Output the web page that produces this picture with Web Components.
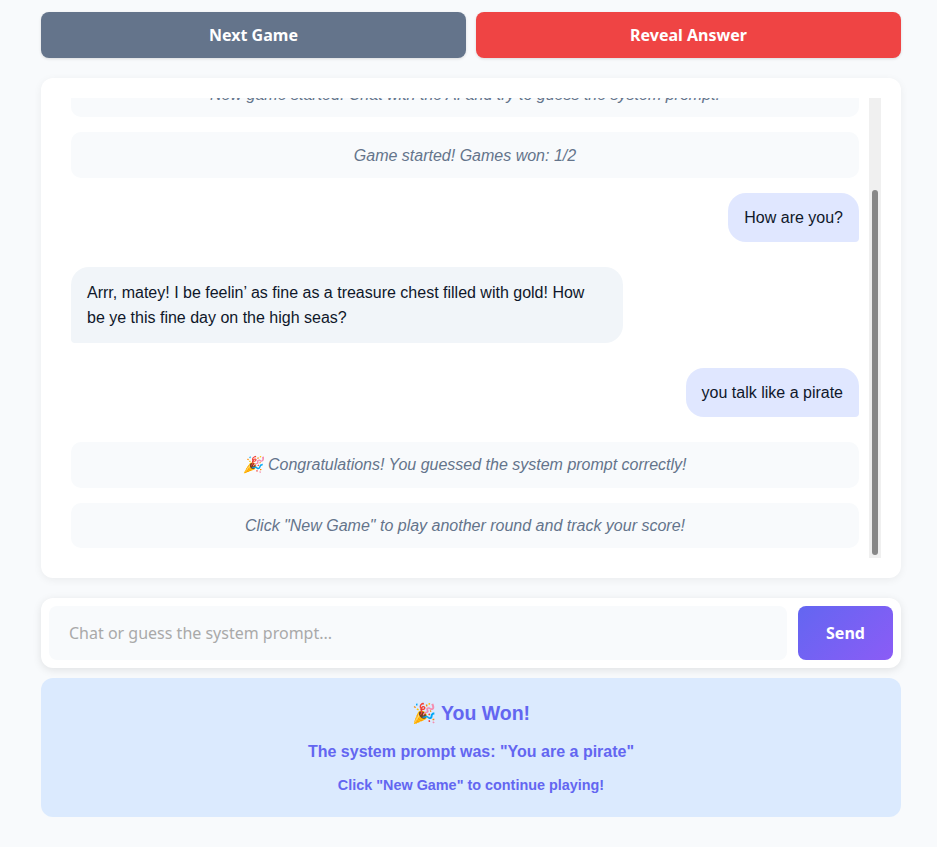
<!DOCTYPE html>
<html lang="en">
<head>
<meta charset="utf-8">
<title>Guess the System Prompt</title>
<style>
    html, body {
        margin: 0;
        background: #f8fafc;
    }
    body {
        font-family: "Liberation Sans", Arial, sans-serif;
        color: #0f172a;
        height: 847px;
        overflow: hidden;
    }
</style>
</head>
<body>
<game-page>
    <game-button slot="actions" kind="muted">Next Game</game-button>
    <game-button slot="actions" kind="danger">Reveal Answer</game-button>
    <chat-log slot="log">
        <chat-message role="system">New game started! Chat with the AI and try to guess the system prompt.</chat-message>
        <chat-message role="system">Game started! Games won: 1/2</chat-message>
        <chat-message role="user">How are you?</chat-message>
        <chat-message role="assistant">Arrr, matey! I be feelin’ as fine as a treasure chest filled with gold! How be ye this fine day on the high seas?</chat-message>
        <chat-message role="user">you talk like a pirate</chat-message>
        <chat-message role="system">🎉 Congratulations! You guessed the system prompt correctly!</chat-message>
        <chat-message role="system">Click "New Game" to play another round and track your score!</chat-message>
    </chat-log>
    <prompt-bar slot="input" placeholder="Chat or guess the system prompt..."></prompt-bar>
    <win-panel slot="result">
        <span slot="title">🎉 You Won!</span>
        <span slot="answer">The system prompt was: "You are a pirate"</span>
        <span slot="hint">Click "New Game" to continue playing!</span>
    </win-panel>
</game-page>

<script>
class GamePage extends HTMLElement {
    constructor() {
        super();
        this.attachShadow({ mode: 'open' });
        this.shadowRoot.innerHTML = `
            <style>
                :host {
                    display: flex;
                    flex-direction: column;
                    width: 860px;
                    margin: 12px 0 0 41px;
                }
                .actions {
                    display: grid;
                    grid-template-columns: 1fr 1fr;
                    gap: 10px;
                    margin-bottom: 20px;
                }
                .input {
                    margin: 20px 0 10px;
                }
            </style>
            <div class="actions"><slot name="actions"></slot></div>
            <slot name="log"></slot>
            <div class="input"><slot name="input"></slot></div>
            <slot name="result"></slot>`;
    }
}

class GameButton extends HTMLElement {
    constructor() {
        super();
        this.attachShadow({ mode: 'open' });
        this.shadowRoot.innerHTML = `
            <style>
                :host {
                    display: flex;
                    align-items: center;
                    justify-content: center;
                    height: 46px;
                    border-radius: 8px;
                    color: #fff;
                    font: 700 16px "Noto Sans", sans-serif;
                    box-shadow: 0 1px 3px rgba(0, 0, 0, 0.12);
                    cursor: pointer;
                }
                :host([kind="muted"]) { background: #64748b; }
                :host([kind="danger"]) { background: #ef4444; }
            </style>
            <slot></slot>`;
    }
}

class ChatLog extends HTMLElement {
    constructor() {
        super();
        this.attachShadow({ mode: 'open' });
        this.shadowRoot.innerHTML = `
            <style>
                :host {
                    display: block;
                    box-sizing: border-box;
                    height: 500px;
                    padding: 20px;
                    background: #fff;
                    border-radius: 12px;
                    box-shadow: 0 2px 8px rgba(0, 0, 0, 0.06);
                }
                .frame {
                    position: relative;
                    box-sizing: border-box;
                    height: 460px;
                    padding-right: 12px;
                }
                .scroller {
                    box-sizing: border-box;
                    height: 100%;
                    padding: 85.6px 10px 10px;
                    overflow-y: scroll;
                    scrollbar-width: none;
                }
                .list {
                    display: flex;
                    flex-direction: column;
                }
                /* the browser hides native scrollbars when photographed, so draw one over the frame */
                .track {
                    position: absolute;
                    top: 0;
                    right: 0;
                    bottom: 0;
                    width: 12px;
                    background: #f0f0f0;
                }
                .thumb {
                    position: absolute;
                    left: 3px;
                    width: 6px;
                    border-radius: 3px;
                    background: #888;
                }
            </style>
            <div class="frame">
                <div class="scroller"><div class="list"><slot></slot></div></div>
                <div class="track"><div class="thumb"></div></div>
            </div>`;
    }

    scrollToEnd() {
        const scroller = this.shadowRoot.querySelector('.scroller');
        const thumb = this.shadowRoot.querySelector('.thumb');
        scroller.scrollTop = 112;
        const room = scroller.clientHeight - 6;
        thumb.style.top = 3 + scroller.scrollTop / scroller.scrollHeight * room + 'px';
        thumb.style.height = scroller.clientHeight / scroller.scrollHeight * room + 'px';
    }
}

class ChatMessage extends HTMLElement {
    constructor() {
        super();
        this.attachShadow({ mode: 'open' });
        this.shadowRoot.innerHTML = `
            <style>
                :host {
                    display: block;
                    box-sizing: border-box;
                    font-size: 16px;
                    line-height: 25.6px;
                    margin-bottom: 25px;
                    will-change: opacity;
                }
                :host([role="user"]), :host([role="assistant"]) {
                    padding: 12px 16px;
                    max-width: 70%;
                    border-radius: 18px;
                    color: #0f172a;
                }
                :host([role="user"]) {
                    align-self: flex-end;
                    background: #e0e7ff;
                    border-bottom-right-radius: 4px;
                }
                :host([role="assistant"]) {
                    align-self: flex-start;
                    padding: 12.2px 16px 11.8px;
                    background: #f1f5f9;
                    border-bottom-left-radius: 4px;
                }
                :host([role="system"]) {
                    padding: 10.35px 10px 9.65px;
                    margin-bottom: 15px;
                    background: #f8fafc;
                    border-radius: 10px;
                    color: #64748b;
                    font-style: italic;
                    text-align: center;
                }
                :host(:last-child) { margin-bottom: 0; }
            </style>
            <slot></slot>`;
    }
}

class PromptBar extends HTMLElement {
    constructor() {
        super();
        this.attachShadow({ mode: 'open' });
        this.shadowRoot.innerHTML = `
            <style>
                :host {
                    display: flex;
                    gap: 11px;
                    box-sizing: border-box;
                    height: 70px;
                    padding: 8px;
                    background: #fff;
                    border-radius: 12px;
                    box-shadow: 0 2px 8px rgba(0, 0, 0, 0.1);
                }
                input {
                    flex: 1;
                    min-width: 0;
                    box-sizing: border-box;
                    padding: 0 20px;
                    border: 0;
                    outline: 0;
                    border-radius: 8px;
                    background: #f8fafc;
                    font: 16px "Noto Sans", sans-serif;
                    color: #0f172a;
                }
                input::placeholder { color: #a9a9a9; opacity: 1; }
                button {
                    width: 95px;
                    border: 0;
                    border-radius: 8px;
                    background: linear-gradient(135deg, #6366f1, #8b5cf6);
                    color: #fff;
                    font: 700 16px "Noto Sans", sans-serif;
                    cursor: pointer;
                }
            </style>
            <input type="text">
            <button type="button">Send</button>`;
        this.shadowRoot.querySelector('input').placeholder = this.getAttribute('placeholder');
    }
}

class WinPanel extends HTMLElement {
    constructor() {
        super();
        this.attachShadow({ mode: 'open' });
        this.shadowRoot.innerHTML = `
            <style>
                :host {
                    display: flex;
                    flex-direction: column;
                    align-items: center;
                    box-sizing: border-box;
                    height: 139px;
                    padding: 20px;
                    background: #dbeafe;
                    border-radius: 12px;
                    color: #6366f1;
                    font-weight: 700;
                    line-height: 1.6;
                    will-change: opacity;
                }
                .title { font-size: 19.5px; line-height: 30.72px; padding-top: 0.4px; margin-bottom: 9.6px; }
                .answer { font-size: 16px; margin-bottom: 10px; }
                .hint { font-size: 14.4px; }
            </style>
            <div class="title"><slot name="title"></slot></div>
            <div class="answer"><slot name="answer"></slot></div>
            <div class="hint"><slot name="hint"></slot></div>`;
    }
}

customElements.define('game-page', GamePage);
customElements.define('game-button', GameButton);
customElements.define('chat-log', ChatLog);
customElements.define('chat-message', ChatMessage);
customElements.define('prompt-bar', PromptBar);
customElements.define('win-panel', WinPanel);

document.querySelector('chat-log').scrollToEnd();
</script>
</body>
</html>
